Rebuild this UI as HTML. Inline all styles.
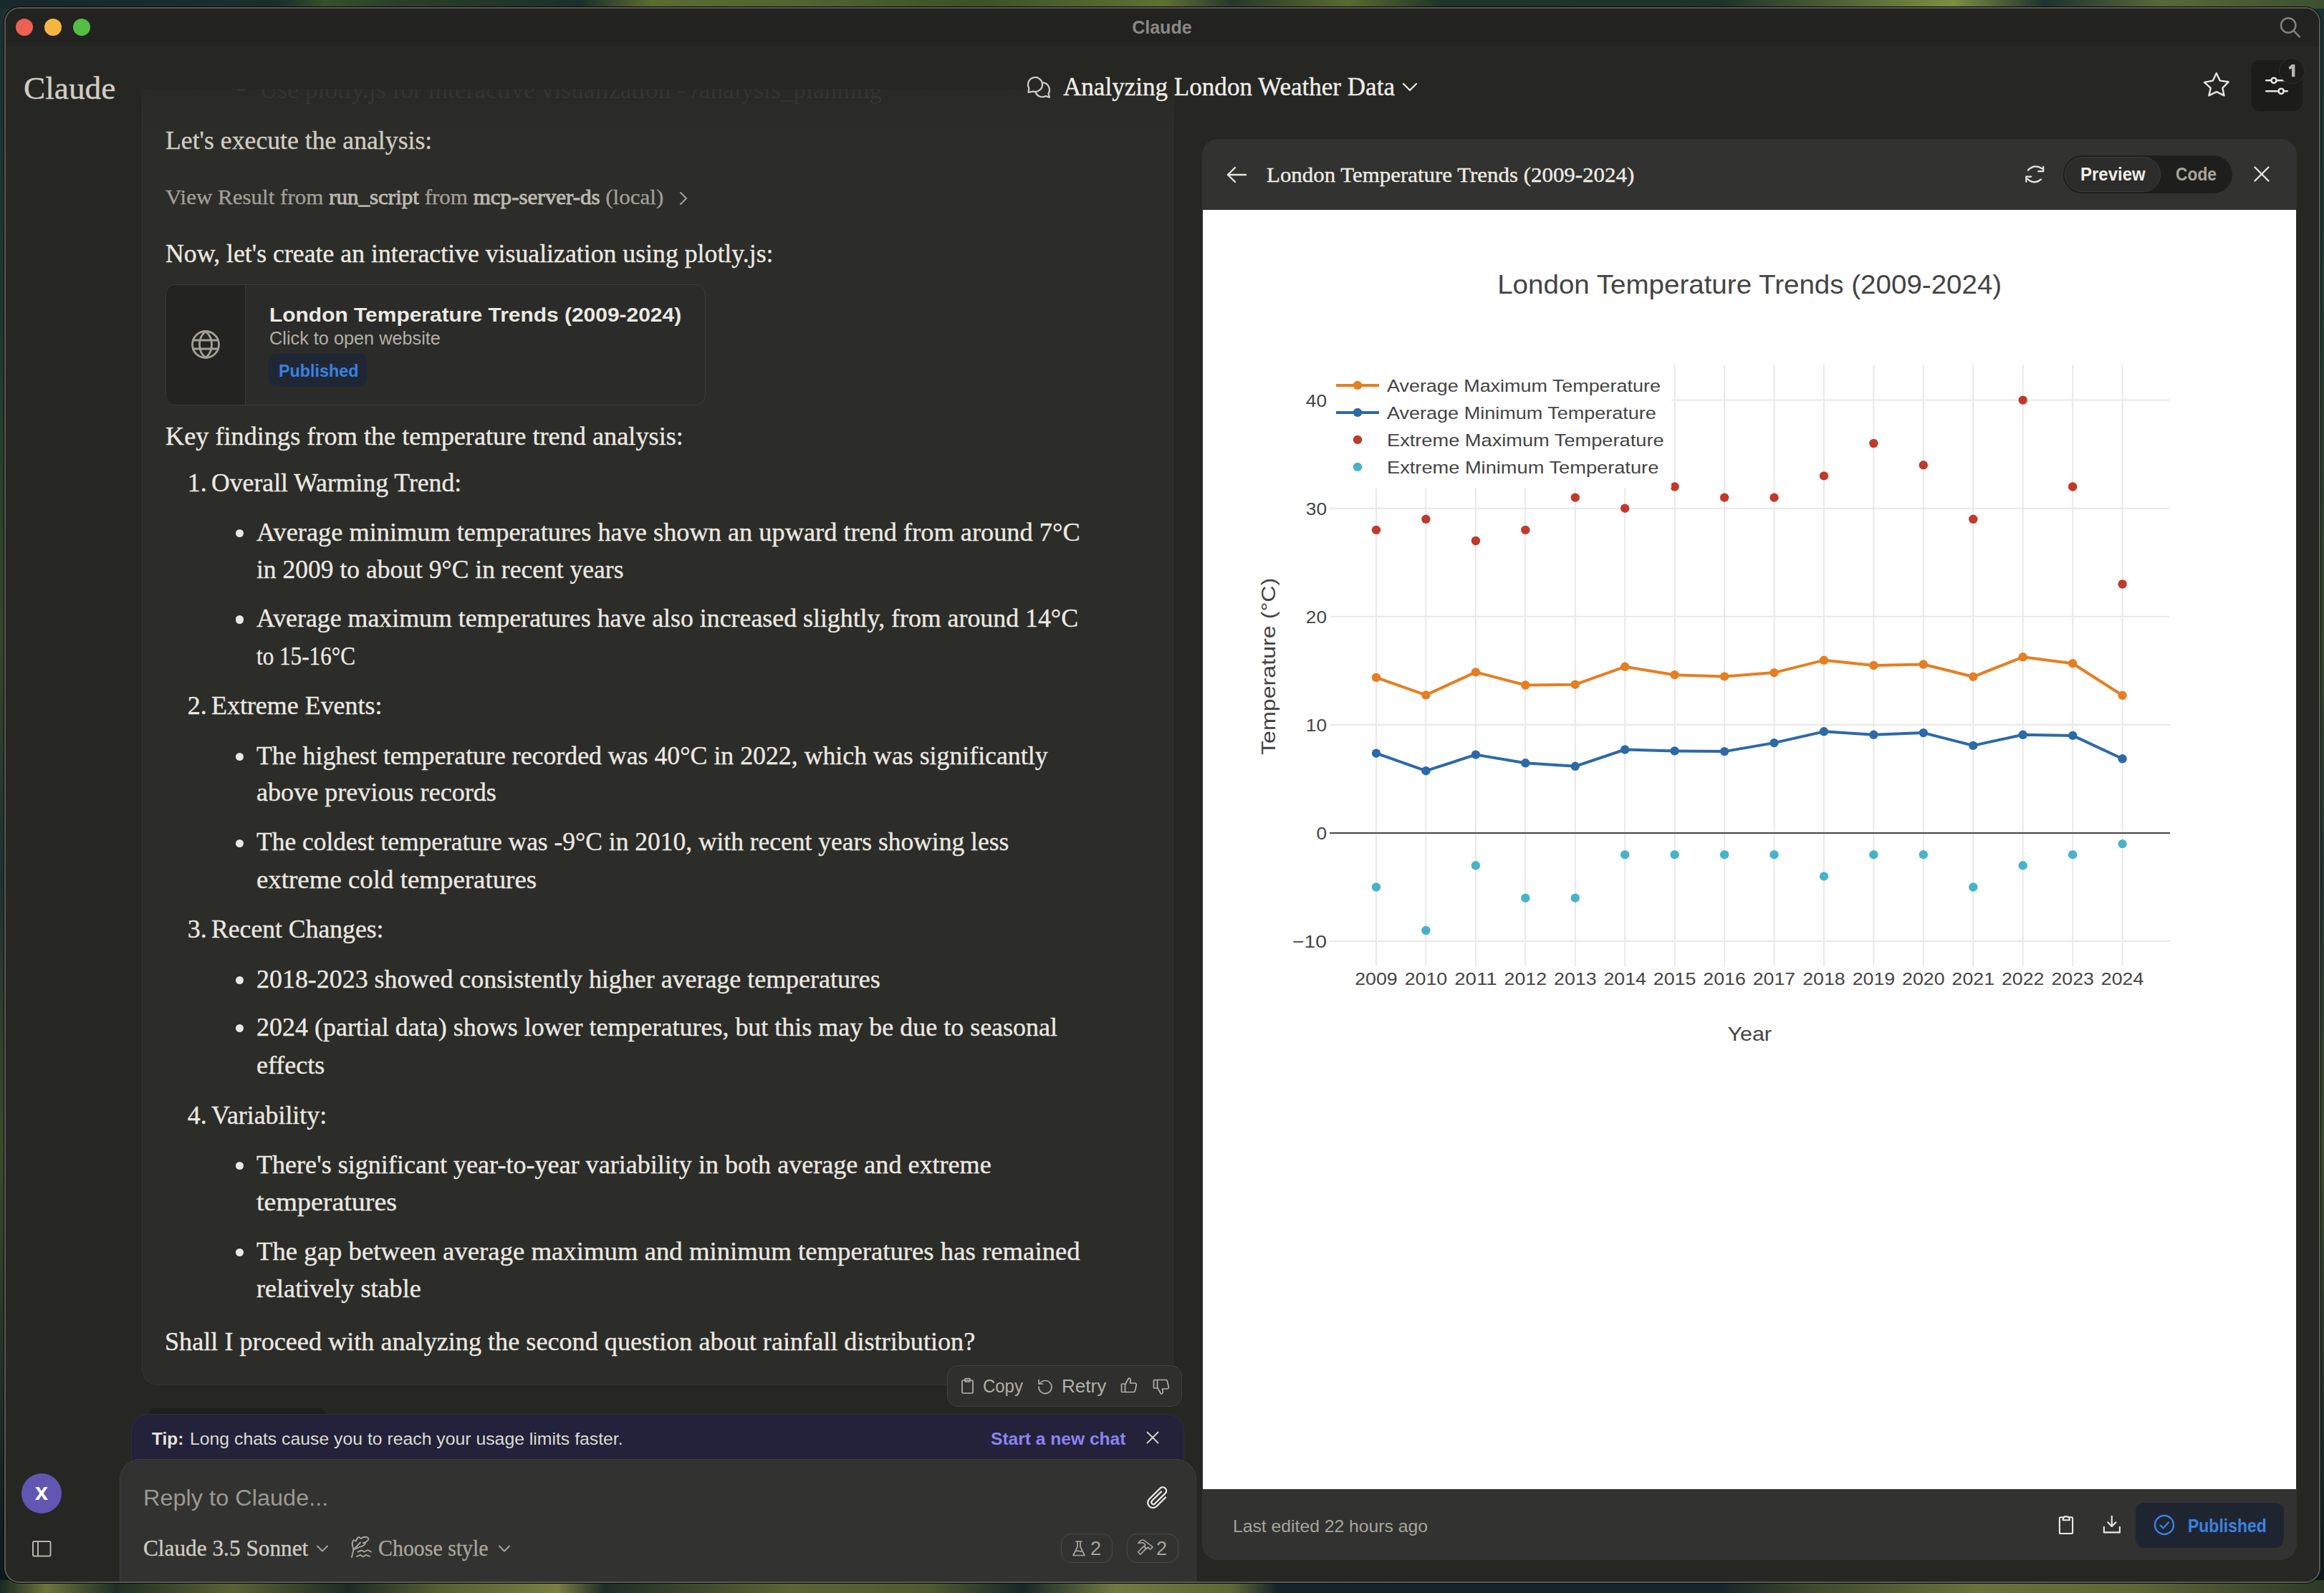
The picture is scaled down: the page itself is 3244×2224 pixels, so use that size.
<!DOCTYPE html>
<html><head><meta charset="utf-8"><title>Claude</title>
<style>
html,body{margin:0;padding:0}
body{width:3244px;height:2224px;position:relative;overflow:hidden;
background:linear-gradient(180deg,#1b3030 0%,#1f372e 20%,#34462b 40%,#1f3030 55%,#3a4a2c 72%,#1c2a26 90%,#0c1618 100%);}
.bgt{position:absolute;left:0;top:0;width:3244px;height:12px;background:linear-gradient(90deg,#17292b 0%,#1a2e2c 12%,#35502a 14%,#2a4028 17%,#1b2f2c 25%,#5c6b32 28%,#4f6230 35%,#3a5228 42%,#607034 50%,#26392a 53%,#5a6a30 58%,#1f3529 62%,#1d3329 74%,#7f8d42 84%,#1e3230 88%,#59683a 93%,#3c5030 100%)}
.bgb{position:absolute;left:0;top:2206px;width:3244px;height:18px;background:linear-gradient(90deg,#1a2a22 0%,#6d7538 2%,#1f3026 5%,#5a6230 10%,#1c2c24 15%,#566030 19%,#7a7e40 24%,#1e2e26 26%,#5c6432 34%,#4e5a2e 40%,#172829 44%,#727a3e 48%,#5e6834 53%,#14232a 55%,#16252a 74%,#3e4a2c 78%,#6a7238 85%,#5e6634 92%,#2c3a28 100%)}
.t{position:absolute;white-space:pre;}
.t.sf{-webkit-text-stroke:0.35px currentColor;}
.a{position:absolute;box-sizing:border-box;}
svg{position:absolute;overflow:visible}
</style></head><body>
<div class='bgt'></div><div class='bgb'></div>
<div class='a' style='left:5.5px;top:10px;width:3233px;height:2199.5px;border-radius:21px;background:#262623;border:2px solid #595956;box-shadow:0 0 0 1px #0a0a0a;overflow:hidden'><div class='a' style='left:0;top:0;width:100%;height:54px;background:#222220'></div></div>
<div class='a' style='left:198px;top:100px;width:1440px;height:1834px;background:#2c2c29;border:1.5px solid #353532;border-top:none;border-radius:0 0 22px 22px'></div>
<div class='t sf' style="left:362.4px;top:107.2px;font-family:'Liberation Serif',serif;font-size:36px;line-height:36px;font-weight:400;color:#41413d;transform:scaleX(0.9827);transform-origin:left center;-webkit-text-stroke:0">Use plotly.js for interactive visualization - /analysis_planning</div>
<div class='a' style='left:332px;top:124px;width:10px;height:3px;background:#474743'></div>
<div class='a' style='left:7.5px;top:65px;width:3229px;height:59px;background:#262623'></div>
<div class='a' style='left:198px;top:124px;width:1440px;height:60px;background:linear-gradient(rgba(38,38,36,0.55) 0%,rgba(43,43,41,0) 100%)'></div>
<div class='a' style='left:1678px;top:194px;width:1528px;height:1984px;background:#323230;border-radius:22px'></div>
<div class='a' style='left:1679px;top:293px;width:1526px;height:1786px;background:#ffffff'></div>
<div class='a' style='left:22px;top:26px;width:24px;height:24px;border-radius:50%;background:#ee5f55'></div>
<div class='a' style='left:62px;top:26px;width:24px;height:24px;border-radius:50%;background:#f5b63f'></div>
<div class='a' style='left:102px;top:26px;width:24px;height:24px;border-radius:50%;background:#55bd46'></div>
<div class='t' style="left:-378.1px;width:4000px;text-align:center;top:26.1px;font-family:'Liberation Sans',sans-serif;font-size:25px;line-height:25px;font-weight:700;color:#8a8985;">Claude</div>
<svg style='left:3174px;top:15px' width='44' height='44' viewBox='0 0 44 44'><circle cx='20.2' cy='20.4' r='10.2' fill='none' stroke='#858580' stroke-width='2.4'/><line x1='27.6' y1='27.8' x2='36' y2='36.5' stroke='#858580' stroke-width='2.4' stroke-linecap='round'/></svg>
<div class='t sf' style="left:32.6px;top:101.3px;font-family:'Liberation Serif',serif;font-size:45px;line-height:45px;font-weight:400;color:#d2cec4;transform:scaleX(1.0073);transform-origin:left center;">Claude</div>
<svg style='left:1425px;top:95px' width='60' height='50' viewBox='0 0 60 50'><g fill='none' stroke='#cfcbc1' stroke-width='2.3' stroke-linejoin='round' stroke-linecap='round'><path d='M11.34 28 A10 10 0 1 1 17.4 32.66 L10.5 33.8 Z'/><path d='M31 20.4 A10 10 0 0 1 38.5 35.5 L39.8 40.8 L34.5 39.2 A10 10 0 0 1 20.7 34.2'/></g></svg>
<div class='t sf' style="left:1484.3px;top:104.4px;font-family:'Liberation Serif',serif;font-size:35px;line-height:35px;font-weight:400;color:#f0eee8;transform:scaleX(1.0020);transform-origin:left center;">Analyzing London Weather Data</div>
<svg style='left:1956px;top:113px' width='24' height='16' viewBox='0 0 24 16'><path d='M3 4l9 9 9-9' fill='none' stroke='#e8e6df' stroke-width='2.4' stroke-linecap='round' stroke-linejoin='round'/></svg>
<svg style='left:3072px;top:98px' width='44' height='42' viewBox='0 0 44 42'><path d='M21.8 4.2L26.8 14.6L38.6 16.3L30.4 24.9L32.5 35.4L22 30.2L11.4 35.4L13.8 24.9L5 16.9L16.9 14.6Z' fill='none' stroke='#e8e6df' stroke-width='2.4' stroke-linejoin='round'/></svg>
<div class='a' style='left:3142px;top:84px;width:72px;height:71px;border-radius:13px;background:#1c1c1a'></div>
<svg style='left:3150px;top:95px' width='50' height='45' viewBox='0 0 50 45'><g fill='none' stroke='#e8e6df' stroke-width='2.5' stroke-linecap='round'><line x1='13.3' y1='17.3' x2='20.4' y2='17.3'/><line x1='27.6' y1='17.3' x2='42.7' y2='17.3'/><circle cx='24' cy='17.3' r='3.6'/><line x1='13.3' y1='32.3' x2='30.6' y2='32.3'/><line x1='37.8' y1='32.3' x2='42.7' y2='32.3'/><circle cx='34.2' cy='32.3' r='3.6'/></g></svg>
<div class='a' style='left:3181px;top:81px;width:36px;height:36px;border-radius:50%;background:#1c1c1a;border:1.5px solid #2e2e2c'></div>
<svg style='left:3190px;top:86px' width='20' height='26' viewBox='0 0 20 26'><path d='M9 4L13.4 4L13.4 21.2L9 21.2L9 9.4L6.1 11.3L4.5 7.9Z' fill='#b8b5ad'/></svg>
<div class='t sf' style="left:230.5px;top:178.0px;font-family:'Liberation Serif',serif;font-size:36px;line-height:36px;font-weight:400;color:#cfccc3;transform:scaleX(0.9918);transform-origin:left center;">Let's execute the analysis:</div>
<div class='t sf' style="left:230.5px;top:260.0px;font-family:'Liberation Serif',serif;font-size:30px;line-height:30px;font-weight:400;color:#a29f96;transform:scaleX(1.0339);transform-origin:left center;">View Result from <b style='color:#bdb9b0;font-weight:400;-webkit-text-stroke:0.9px #bdb9b0'>run_script</b> from <b style='color:#bdb9b0;font-weight:400;-webkit-text-stroke:0.9px #bdb9b0'>mcp-server-ds</b> (local)</div>
<svg style='left:944px;top:266px' width='20' height='22' viewBox='0 0 20 22'><path d='M6 3l8 8-8 8' fill='none' stroke='#a29f96' stroke-width='2.2' stroke-linecap='round' stroke-linejoin='round'/></svg>
<div class='t sf' style="left:230.5px;top:336.2px;font-family:'Liberation Serif',serif;font-size:36px;line-height:36px;font-weight:400;color:#ebe9e2;transform:scaleX(0.9929);transform-origin:left center;">Now, let's create an interactive visualization using plotly.js:</div>
<div class='a' style='left:230.5px;top:396.6px;width:754px;height:169px;border-radius:14px;background:#2b2b29;border:1.5px solid #3c3c39;overflow:hidden'><div class='a' style='left:0;top:0;width:111px;height:100%;background:#232321;border-right:1.5px solid #3c3c39'></div></div>
<svg style='left:264px;top:458px' width='46' height='46' viewBox='0 0 46 46'><g fill='none' stroke='#a3a097' stroke-width='2.8'><circle cx='23' cy='23' r='18.5'/><path d='M23 4.8A17 21 0 0 0 23 41.2A17 21 0 0 0 23 4.8Z'/><line x1='4.5' y1='17' x2='41.5' y2='17'/><line x1='4.5' y1='29' x2='41.5' y2='29'/></g></svg>
<div class='t' style="left:376.1px;top:426.0px;font-family:'Liberation Sans',sans-serif;font-size:27.5px;line-height:27.5px;font-weight:700;color:#eceae3;transform:scaleX(1.0887);transform-origin:left center;">London Temperature Trends (2009-2024)</div>
<div class='t' style="left:376.1px;top:460.4px;font-family:'Liberation Sans',sans-serif;font-size:25px;line-height:25px;font-weight:400;color:#b3b0a7;transform:scaleX(1.0113);transform-origin:left center;">Click to open website</div>
<div class='a' style='left:375.2px;top:493px;width:137px;height:47.4px;border-radius:12px;background:#1f2734'></div>
<div class='t' style="left:388.8px;top:505.5px;font-family:'Liberation Sans',sans-serif;font-size:24.5px;line-height:24.5px;font-weight:700;color:#3b82e0;transform:scaleX(0.9524);transform-origin:left center;">Published</div>
<div class='t sf' style="left:230.5px;top:591.0px;font-family:'Liberation Serif',serif;font-size:36px;line-height:36px;font-weight:400;color:#ebe9e2;transform:scaleX(1.0071);transform-origin:left center;">Key findings from the temperature trend analysis:</div>
<div class='t sf' style="left:261.8px;top:656.1px;font-family:'Liberation Serif',serif;font-size:36px;line-height:36px;font-weight:400;color:#ebe9e2;">1.</div>
<div class='t sf' style="left:294.6px;top:656.1px;font-family:'Liberation Serif',serif;font-size:36px;line-height:36px;font-weight:400;color:#ebe9e2;transform:scaleX(0.9909);transform-origin:left center;">Overall Warming Trend:</div>
<div class='a' style='left:328.9px;top:738.7px;width:11.4px;height:11.4px;border-radius:50%;background:#ebe9e2'></div>
<div class='t sf' style="left:358.3px;top:724.6px;font-family:'Liberation Serif',serif;font-size:36px;line-height:36px;font-weight:400;color:#ebe9e2;transform:scaleX(1.0090);transform-origin:left center;">Average minimum temperatures have shown an upward trend from around 7°C</div>
<div class='t sf' style="left:358.3px;top:777.1px;font-family:'Liberation Serif',serif;font-size:36px;line-height:36px;font-weight:400;color:#ebe9e2;transform:scaleX(0.9869);transform-origin:left center;">in 2009 to about 9°C in recent years</div>
<div class='a' style='left:328.9px;top:859.4px;width:11.4px;height:11.4px;border-radius:50%;background:#ebe9e2'></div>
<div class='t sf' style="left:358.3px;top:845.4px;font-family:'Liberation Serif',serif;font-size:36px;line-height:36px;font-weight:400;color:#ebe9e2;transform:scaleX(0.9948);transform-origin:left center;">Average maximum temperatures have also increased slightly, from around 14°C</div>
<div class='t sf' style="left:358.3px;top:898.1px;font-family:'Liberation Serif',serif;font-size:36px;line-height:36px;font-weight:400;color:#ebe9e2;transform:scaleX(0.8657);transform-origin:left center;">to 15-16°C</div>
<div class='t sf' style="left:261.8px;top:966.6px;font-family:'Liberation Serif',serif;font-size:36px;line-height:36px;font-weight:400;color:#ebe9e2;">2.</div>
<div class='t sf' style="left:294.6px;top:966.6px;font-family:'Liberation Serif',serif;font-size:36px;line-height:36px;font-weight:400;color:#ebe9e2;transform:scaleX(0.9982);transform-origin:left center;">Extreme Events:</div>
<div class='a' style='left:328.9px;top:1050.6px;width:11.4px;height:11.4px;border-radius:50%;background:#ebe9e2'></div>
<div class='t sf' style="left:358.3px;top:1036.5px;font-family:'Liberation Serif',serif;font-size:36px;line-height:36px;font-weight:400;color:#ebe9e2;transform:scaleX(0.9941);transform-origin:left center;">The highest temperature recorded was 40°C in 2022, which was significantly</div>
<div class='t sf' style="left:358.3px;top:1087.8px;font-family:'Liberation Serif',serif;font-size:36px;line-height:36px;font-weight:400;color:#ebe9e2;transform:scaleX(1.0030);transform-origin:left center;">above previous records</div>
<div class='a' style='left:328.9px;top:1171.5px;width:11.4px;height:11.4px;border-radius:50%;background:#ebe9e2'></div>
<div class='t sf' style="left:358.3px;top:1157.4px;font-family:'Liberation Serif',serif;font-size:36px;line-height:36px;font-weight:400;color:#ebe9e2;transform:scaleX(0.9851);transform-origin:left center;">The coldest temperature was -9°C in 2010, with recent years showing less</div>
<div class='t sf' style="left:358.3px;top:1210.1px;font-family:'Liberation Serif',serif;font-size:36px;line-height:36px;font-weight:400;color:#ebe9e2;transform:scaleX(1.0243);transform-origin:left center;">extreme cold temperatures</div>
<div class='t sf' style="left:261.8px;top:1278.8px;font-family:'Liberation Serif',serif;font-size:36px;line-height:36px;font-weight:400;color:#ebe9e2;">3.</div>
<div class='t sf' style="left:294.6px;top:1278.8px;font-family:'Liberation Serif',serif;font-size:36px;line-height:36px;font-weight:400;color:#ebe9e2;transform:scaleX(0.9900);transform-origin:left center;">Recent Changes:</div>
<div class='a' style='left:328.9px;top:1362.8px;width:11.4px;height:11.4px;border-radius:50%;background:#ebe9e2'></div>
<div class='t sf' style="left:358.3px;top:1348.8px;font-family:'Liberation Serif',serif;font-size:36px;line-height:36px;font-weight:400;color:#ebe9e2;transform:scaleX(0.9977);transform-origin:left center;">2018-2023 showed consistently higher average temperatures</div>
<div class='a' style='left:328.9px;top:1430.1px;width:11.4px;height:11.4px;border-radius:50%;background:#ebe9e2'></div>
<div class='t sf' style="left:358.3px;top:1416.0px;font-family:'Liberation Serif',serif;font-size:36px;line-height:36px;font-weight:400;color:#ebe9e2;transform:scaleX(0.9994);transform-origin:left center;">2024 (partial data) shows lower temperatures, but this may be due to seasonal</div>
<div class='t sf' style="left:358.3px;top:1469.2px;font-family:'Liberation Serif',serif;font-size:36px;line-height:36px;font-weight:400;color:#ebe9e2;transform:scaleX(1.0012);transform-origin:left center;">effects</div>
<div class='t sf' style="left:261.8px;top:1538.6px;font-family:'Liberation Serif',serif;font-size:36px;line-height:36px;font-weight:400;color:#ebe9e2;">4.</div>
<div class='t sf' style="left:294.6px;top:1538.6px;font-family:'Liberation Serif',serif;font-size:36px;line-height:36px;font-weight:400;color:#ebe9e2;transform:scaleX(0.9946);transform-origin:left center;">Variability:</div>
<div class='a' style='left:328.9px;top:1621.7px;width:11.4px;height:11.4px;border-radius:50%;background:#ebe9e2'></div>
<div class='t sf' style="left:358.3px;top:1607.6px;font-family:'Liberation Serif',serif;font-size:36px;line-height:36px;font-weight:400;color:#ebe9e2;transform:scaleX(1.0023);transform-origin:left center;">There's significant year-to-year variability in both average and extreme</div>
<div class='t sf' style="left:358.3px;top:1660.2px;font-family:'Liberation Serif',serif;font-size:36px;line-height:36px;font-weight:400;color:#ebe9e2;transform:scaleX(1.0548);transform-origin:left center;">temperatures</div>
<div class='a' style='left:328.9px;top:1742.8px;width:11.4px;height:11.4px;border-radius:50%;background:#ebe9e2'></div>
<div class='t sf' style="left:358.3px;top:1728.8px;font-family:'Liberation Serif',serif;font-size:36px;line-height:36px;font-weight:400;color:#ebe9e2;transform:scaleX(1.0205);transform-origin:left center;">The gap between average maximum and minimum temperatures has remained</div>
<div class='t sf' style="left:358.3px;top:1781.1px;font-family:'Liberation Serif',serif;font-size:36px;line-height:36px;font-weight:400;color:#ebe9e2;transform:scaleX(1.0035);transform-origin:left center;">relatively stable</div>
<div class='t sf' style="left:230.2px;top:1855.1px;font-family:'Liberation Serif',serif;font-size:36px;line-height:36px;font-weight:400;color:#ebe9e2;transform:scaleX(1.0049);transform-origin:left center;">Shall I proceed with analyzing the second question about rainfall distribution?</div>
<div class='a' style='left:1322px;top:1906px;width:328px;height:58px;border-radius:15px;background:#2f2f2d;border:1.5px solid #43423e'></div>
<svg style='left:1338px;top:1922px' width='26' height='26' viewBox='0 0 26 26'><g fill='none' stroke='#b3b0a7' stroke-width='1.7' stroke-linejoin='round'><rect x='5' y='5' width='15' height='18' rx='1.5'/><rect x='9' y='2.5' width='7' height='4.5' rx='1'/></g></svg>
<div class='t' style="left:1372.2px;top:1923.4px;font-family:'Liberation Sans',sans-serif;font-size:25px;line-height:25px;font-weight:400;color:#b3b0a7;transform:scaleX(0.9576);transform-origin:left center;">Copy</div>
<svg style='left:1446px;top:1922px' width='26' height='26' viewBox='0 0 26 26'><g fill='none' stroke='#b3b0a7' stroke-width='1.7' stroke-linecap='round' stroke-linejoin='round'><path d='M5.5 9.5A9 9 0 1 1 4 14'/><path d='M4 4.5v5.5h5.5'/></g></svg>
<div class='t' style="left:1482.0px;top:1923.4px;font-family:'Liberation Sans',sans-serif;font-size:25px;line-height:25px;font-weight:400;color:#b3b0a7;transform:scaleX(1.0430);transform-origin:left center;">Retry</div>
<svg style='left:1563px;top:1921px' width='26' height='26' viewBox='0 0 26 26'><g fill='none' stroke='#b3b0a7' stroke-width='1.7' stroke-linejoin='round'><rect x='2.5' y='11' width='5' height='11.5' rx='1'/><path d='M7.5 12l5-9c2 0 3 1.5 2.6 3.5L14.5 10h6.5c1.5 0 2.5 1.3 2.2 2.8l-1.8 8c-.3 1-1.1 1.7-2.2 1.7H7.5'/></g></svg>
<svg style='left:1608px;top:1923px' width='26' height='26' viewBox='0 0 26 26'><g fill='none' stroke='#b3b0a7' stroke-width='1.7' stroke-linejoin='round' transform='translate(0,26) scale(1,-1)'><rect x='2.5' y='11' width='5' height='11.5' rx='1'/><path d='M7.5 12l5-9c2 0 3 1.5 2.6 3.5L14.5 10h6.5c1.5 0 2.5 1.3 2.2 2.8l-1.8 8c-.3 1-1.1 1.7-2.2 1.7H7.5'/></g></svg>
<div class='a' style='left:206px;top:1966px;width:250px;height:20px;border-radius:12px 12px 0 0;background:#1e1e1c'></div>
<div class='a' style='left:183px;top:1973.5px;width:1470px;height:100px;border-radius:24px 24px 0 0;background:#23223a;border:1.5px solid #2e2c4e'></div>
<div class='t' style="left:211.7px;top:1997.1px;font-family:'Liberation Sans',sans-serif;font-size:24.5px;line-height:24.5px;font-weight:700;color:#e6e4dd;transform:scaleX(0.9962);transform-origin:left center;">Tip:</div>
<div class='t' style="left:264.6px;top:1997.1px;font-family:'Liberation Sans',sans-serif;font-size:24.5px;line-height:24.5px;font-weight:400;color:#dddbd4;transform:scaleX(1.0113);transform-origin:left center;">Long chats cause you to reach your usage limits faster.</div>
<div class='t' style="left:1383.0px;top:1997.1px;font-family:'Liberation Sans',sans-serif;font-size:24.5px;line-height:24.5px;font-weight:700;color:#8e83f2;transform:scaleX(1.0027);transform-origin:left center;">Start a new chat</div>
<svg style='left:1598px;top:1996px' width='22' height='22' viewBox='0 0 22 22'><g stroke='#d8d6cf' stroke-width='1.8' stroke-linecap='round'><line x1='3.5' y1='3.5' x2='18.5' y2='18.5'/><line x1='18.5' y1='3.5' x2='3.5' y2='18.5'/></g></svg>
<div class='a' style='left:166.5px;top:2037px;width:1503px;height:171px;border-radius:28px 28px 0 0;background:#323230;border:1.5px solid #3d3d3a;border-bottom:none'></div>
<div class='t' style="left:200.0px;top:2075.5px;font-family:'Liberation Sans',sans-serif;font-size:31px;line-height:31px;font-weight:400;color:#9c9991;transform:scaleX(1.0482);transform-origin:left center;">Reply to Claude...</div>
<svg style='left:1590px;top:2065px' width='50' height='50' viewBox='0 0 50 50'><path d='M37 25.5L24.5 38A7.2 7.2 0 0 1 14.3 27.8L29.8 12.5A5 5 0 0 1 36.8 19.6L22 34.3A2.83 2.83 0 0 1 18 30.3L31 17.5' fill='none' stroke='#eceae3' stroke-width='2.3' stroke-linecap='round' stroke-linejoin='round'/></svg>
<div class='t sf' style="left:200.0px;top:2145.6px;font-family:'Liberation Serif',serif;font-size:31.5px;line-height:31.5px;font-weight:400;color:#cfccc3;transform:scaleX(0.9933);transform-origin:left center;">Claude 3.5 Sonnet</div>
<svg style='left:440px;top:2155px' width='20' height='14' viewBox='0 0 20 14'><path d='M3 3.5l7 7 7-7' fill='none' stroke='#a8a59c' stroke-width='2' stroke-linecap='round' stroke-linejoin='round'/></svg>
<svg style='left:480px;top:2135px' width='50' height='50' viewBox='0 0 50 50'><g fill='none' stroke='#a8a59c' stroke-width='1.9' stroke-linejoin='round' stroke-linecap='round'><path d='M13.5 28.5C12 24 10 18 14 15L17 16.5C18 13 20 11 21 11L24 13C26 11 29 10.5 32 11C34 12 35 13.5 34 15L30.5 18L27 19L30 20C29 21.5 28 22.5 27 23C23 24.5 19 25.5 13.5 28.5Z'/><path d='M11 39L13.5 28.5L23 18.5'/><path d='M19.5 31.5L25 29.5L28.5 31.5L33.3 29L38 31.5'/><path d='M18 38L23 35.8L26.7 38.5L31 35.8L36 37.8'/></g></svg>
<div class='t sf' style="left:528.4px;top:2145.6px;font-family:'Liberation Serif',serif;font-size:31.5px;line-height:31.5px;font-weight:400;color:#a8a59c;transform:scaleX(0.9489);transform-origin:left center;">Choose style</div>
<svg style='left:694px;top:2155px' width='20' height='14' viewBox='0 0 20 14'><path d='M3 3.5l7 7 7-7' fill='none' stroke='#a8a59c' stroke-width='2' stroke-linecap='round' stroke-linejoin='round'/></svg>
<div class='a' style='left:1481px;top:2140.5px;width:72px;height:41.5px;border-radius:14px;border:1.5px solid #4a4944'></div>
<svg style='left:1494px;top:2149px' width='24' height='26' viewBox='0 0 24 26'><path d='M8 3h8M10 3v7.5L4 22.5h16L14 10.5V3' fill='none' stroke='#a8a59c' stroke-width='1.7' stroke-linejoin='round' stroke-linecap='round'/><path d='M7 16.5c3-1.5 6 1.5 10 0' fill='none' stroke='#a8a59c' stroke-width='1.8'/></svg>
<div class='t' style="left:1522.0px;top:2149.1px;font-family:'Liberation Sans',sans-serif;font-size:27px;line-height:27px;font-weight:400;color:#a8a59c;">2</div>
<div class='a' style='left:1573.4px;top:2140.5px;width:72px;height:41.5px;border-radius:14px;border:1.5px solid #4a4944'></div>
<svg style='left:1586px;top:2147px' width='26' height='26' viewBox='0 0 26 26'><g fill='none' stroke='#a8a59c' stroke-width='1.6' stroke-linejoin='round'><path d='M2.5 19.8l8.2-8.2 3.3 3.3-8.2 8.2z'/><path d='M2.8 7.5C5 4 8 2.5 10.5 3.2L23 12.6l-3.3 3.6-3.5-3-2.2 2.3-3.3-3.3 2.2-2.3-2.8-2.8C8 6.5 5 6.5 2.8 7.5z'/></g></svg>
<div class='t' style="left:1614.0px;top:2149.1px;font-family:'Liberation Sans',sans-serif;font-size:27px;line-height:27px;font-weight:400;color:#a8a59c;">2</div>
<div class='a' style='left:30px;top:2057px;width:56px;height:56px;border-radius:50%;background:#6156b2'></div>
<div class='t' style="left:-1942.0px;width:4000px;text-align:center;top:2066.2px;font-family:'Liberation Sans',sans-serif;font-size:33px;line-height:33px;font-weight:700;color:#ffffff;">x</div>
<svg style='left:40px;top:2146px' width='36' height='32' viewBox='0 0 36 32'><g fill='none' stroke='#b8b4aa' stroke-width='2'><rect x='6' y='6' width='24.5' height='20.5' rx='2'/><line x1='13' y1='6' x2='13' y2='26.5'/></g></svg>
<svg style='left:1710px;top:230px' width='34' height='28' viewBox='0 0 34 28'><g fill='none' stroke='#e8e6df' stroke-width='2.4' stroke-linecap='round' stroke-linejoin='round'><line x1='4' y1='14' x2='29' y2='14'/><path d='M14 4L4 14l10 10'/></g></svg>
<div class='t sf' style="left:1767.8px;top:228.7px;font-family:'Liberation Serif',serif;font-size:30px;line-height:30px;font-weight:400;color:#eeece5;transform:scaleX(1.0303);transform-origin:left center;">London Temperature Trends (2009-2024)</div>
<svg style='left:2824px;top:228px' width='32' height='32' viewBox='0 0 32 32'><g fill='none' stroke='#e8e6df' stroke-width='2.2' stroke-linecap='round' stroke-linejoin='round'><path d='M6.7 9.6Q16.3 0.5 26.6 7.5'/><path d='M28.2 4.9V11.2H21.2'/><path d='M25 22.4Q15.5 30.5 5.9 21.6'/><path d='M4.3 25.8V18.6H11.3'/></g></svg>
<div class='a' style='left:2880.3px;top:216.5px;width:236.2px;height:53.6px;border-radius:27px;background:#1e1e1c'></div>
<div class='a' style='left:2882.3px;top:218.5px;width:133.5px;height:49.6px;border-radius:25px;background:#2c2c2a;border:1.5px solid #3e3e3b'></div>
<div class='t' style="left:2904.0px;top:231.4px;font-family:'Liberation Sans',sans-serif;font-size:25px;line-height:25px;font-weight:700;color:#f0eee8;transform:scaleX(0.9586);transform-origin:left center;">Preview</div>
<div class='t' style="left:3037.0px;top:231.4px;font-family:'Liberation Sans',sans-serif;font-size:25px;line-height:25px;font-weight:700;color:#a8a59c;transform:scaleX(0.9120);transform-origin:left center;">Code</div>
<svg style='left:3144px;top:230px' width='26' height='26' viewBox='0 0 26 26'><g stroke='#e8e6df' stroke-width='2.4' stroke-linecap='round'><line x1='3.5' y1='3.5' x2='22.5' y2='22.5'/><line x1='22.5' y1='3.5' x2='3.5' y2='22.5'/></g></svg>
<div class='t' style="left:1720.7px;top:2118.7px;font-family:'Liberation Sans',sans-serif;font-size:24px;line-height:24px;font-weight:400;color:#a8a59c;transform:scaleX(1.0295);transform-origin:left center;">Last edited 22 hours ago</div>
<svg style='left:2870px;top:2113px' width='30' height='32' viewBox='0 0 30 32'><g fill='none' stroke='#eceae3' stroke-width='2.1' stroke-linejoin='round'><rect x='4.9' y='5.2' width='18.2' height='22.8' rx='1.5'/><path d='M9.5 9.3L10 6.5A4.6 4 0 0 1 18.4 6.5L18.9 9.3Z' fill='#323230'/></g></svg>
<svg style='left:2932px;top:2112px' width='32' height='32' viewBox='0 0 32 32'><g fill='none' stroke='#eceae3' stroke-width='2.1' stroke-linecap='round' stroke-linejoin='round'><line x1='15.8' y1='4.8' x2='15.8' y2='19'/><path d='M10.3 13.3L15.8 19L21.4 13.3'/><path d='M4.9 19V27.4H26.9V19' stroke-linecap='butt' stroke-linejoin='miter'/></g></svg>
<div class='a' style='left:2980.7px;top:2098px;width:207.7px;height:62.5px;border-radius:12px;background:#1f2530'></div>
<svg style='left:3003px;top:2111px' width='36' height='36' viewBox='0 0 36 36'><g fill='none' stroke='#3b82e0' stroke-width='2.4' stroke-linecap='round' stroke-linejoin='round'><circle cx='18' cy='18' r='13'/><path d='M12.5 18.5l4 4 7.5-8'/></g></svg>
<div class='t' style="left:3053.5px;top:2117.0px;font-family:'Liberation Sans',sans-serif;font-size:26px;line-height:26px;font-weight:700;color:#3b82e0;transform:scaleX(0.8837);transform-origin:left center;">Published</div>
<svg style='left:0;top:0' width='3244' height='2224' viewBox='0 0 3244 2224'><g font-family='Liberation Sans, sans-serif' fill='#444444'><line x1='1856' x2='3029' y1='558.6' y2='558.6' stroke='#e8e8e8' stroke-width='2'/><line x1='1856' x2='3029' y1='709.7' y2='709.7' stroke='#e8e8e8' stroke-width='2'/><line x1='1856' x2='3029' y1='860.8' y2='860.8' stroke='#e8e8e8' stroke-width='2'/><line x1='1856' x2='3029' y1='1011.9' y2='1011.9' stroke='#e8e8e8' stroke-width='2'/><line x1='1856' x2='3029' y1='1314.1' y2='1314.1' stroke='#e8e8e8' stroke-width='2'/><line x1='1921.0' x2='1921.0' y1='509' y2='1349' stroke='#e8e8e8' stroke-width='2'/><line x1='1990.4' x2='1990.4' y1='509' y2='1349' stroke='#e8e8e8' stroke-width='2'/><line x1='2059.9' x2='2059.9' y1='509' y2='1349' stroke='#e8e8e8' stroke-width='2'/><line x1='2129.3' x2='2129.3' y1='509' y2='1349' stroke='#e8e8e8' stroke-width='2'/><line x1='2198.8' x2='2198.8' y1='509' y2='1349' stroke='#e8e8e8' stroke-width='2'/><line x1='2268.2' x2='2268.2' y1='509' y2='1349' stroke='#e8e8e8' stroke-width='2'/><line x1='2337.6' x2='2337.6' y1='509' y2='1349' stroke='#e8e8e8' stroke-width='2'/><line x1='2407.1' x2='2407.1' y1='509' y2='1349' stroke='#e8e8e8' stroke-width='2'/><line x1='2476.5' x2='2476.5' y1='509' y2='1349' stroke='#e8e8e8' stroke-width='2'/><line x1='2546.0' x2='2546.0' y1='509' y2='1349' stroke='#e8e8e8' stroke-width='2'/><line x1='2615.4' x2='2615.4' y1='509' y2='1349' stroke='#e8e8e8' stroke-width='2'/><line x1='2684.8' x2='2684.8' y1='509' y2='1349' stroke='#e8e8e8' stroke-width='2'/><line x1='2754.3' x2='2754.3' y1='509' y2='1349' stroke='#e8e8e8' stroke-width='2'/><line x1='2823.7' x2='2823.7' y1='509' y2='1349' stroke='#e8e8e8' stroke-width='2'/><line x1='2893.2' x2='2893.2' y1='509' y2='1349' stroke='#e8e8e8' stroke-width='2'/><line x1='2962.6' x2='2962.6' y1='509' y2='1349' stroke='#e8e8e8' stroke-width='2'/><line x1='1856' x2='3029' y1='1163.0' y2='1163.0' stroke='#444' stroke-width='2'/><polyline points='1921.0,945.9 1990.4,970.4 2059.9,938.4 2129.3,956.5 2198.8,955.7 2268.2,930.8 2337.6,942.2 2407.1,944.4 2476.5,939.1 2546.0,921.8 2615.4,929.0 2684.8,927.5 2754.3,944.8 2823.7,917.3 2893.2,926.3 2962.6,970.8' fill='none' stroke='#e67e22' stroke-width='4' stroke-linejoin='round'/><circle cx='1921.0' cy='945.9' r='6.2' fill='#e67e22'/><circle cx='1990.4' cy='970.4' r='6.2' fill='#e67e22'/><circle cx='2059.9' cy='938.4' r='6.2' fill='#e67e22'/><circle cx='2129.3' cy='956.5' r='6.2' fill='#e67e22'/><circle cx='2198.8' cy='955.7' r='6.2' fill='#e67e22'/><circle cx='2268.2' cy='930.8' r='6.2' fill='#e67e22'/><circle cx='2337.6' cy='942.2' r='6.2' fill='#e67e22'/><circle cx='2407.1' cy='944.4' r='6.2' fill='#e67e22'/><circle cx='2476.5' cy='939.1' r='6.2' fill='#e67e22'/><circle cx='2546.0' cy='921.8' r='6.2' fill='#e67e22'/><circle cx='2615.4' cy='929.0' r='6.2' fill='#e67e22'/><circle cx='2684.8' cy='927.5' r='6.2' fill='#e67e22'/><circle cx='2754.3' cy='944.8' r='6.2' fill='#e67e22'/><circle cx='2823.7' cy='917.3' r='6.2' fill='#e67e22'/><circle cx='2893.2' cy='926.3' r='6.2' fill='#e67e22'/><circle cx='2962.6' cy='970.8' r='6.2' fill='#e67e22'/><polyline points='1921.0,1051.7 1990.4,1076.2 2059.9,1053.6 2129.3,1065.3 2198.8,1069.8 2268.2,1046.5 2337.6,1048.4 2407.1,1049.1 2476.5,1037.1 2546.0,1021.3 2615.4,1025.8 2684.8,1023.1 2754.3,1040.9 2823.7,1025.8 2893.2,1026.9 2962.6,1059.3' fill='none' stroke='#2c69a8' stroke-width='4' stroke-linejoin='round'/><circle cx='1921.0' cy='1051.7' r='6.2' fill='#2c69a8'/><circle cx='1990.4' cy='1076.2' r='6.2' fill='#2c69a8'/><circle cx='2059.9' cy='1053.6' r='6.2' fill='#2c69a8'/><circle cx='2129.3' cy='1065.3' r='6.2' fill='#2c69a8'/><circle cx='2198.8' cy='1069.8' r='6.2' fill='#2c69a8'/><circle cx='2268.2' cy='1046.5' r='6.2' fill='#2c69a8'/><circle cx='2337.6' cy='1048.4' r='6.2' fill='#2c69a8'/><circle cx='2407.1' cy='1049.1' r='6.2' fill='#2c69a8'/><circle cx='2476.5' cy='1037.1' r='6.2' fill='#2c69a8'/><circle cx='2546.0' cy='1021.3' r='6.2' fill='#2c69a8'/><circle cx='2615.4' cy='1025.8' r='6.2' fill='#2c69a8'/><circle cx='2684.8' cy='1023.1' r='6.2' fill='#2c69a8'/><circle cx='2754.3' cy='1040.9' r='6.2' fill='#2c69a8'/><circle cx='2823.7' cy='1025.8' r='6.2' fill='#2c69a8'/><circle cx='2893.2' cy='1026.9' r='6.2' fill='#2c69a8'/><circle cx='2962.6' cy='1059.3' r='6.2' fill='#2c69a8'/><circle cx='1921.0' cy='739.9' r='6.2' fill='#c0392b'/><circle cx='1990.4' cy='724.8' r='6.2' fill='#c0392b'/><circle cx='2059.9' cy='755.0' r='6.2' fill='#c0392b'/><circle cx='2129.3' cy='739.9' r='6.2' fill='#c0392b'/><circle cx='2198.8' cy='694.6' r='6.2' fill='#c0392b'/><circle cx='2268.2' cy='709.7' r='6.2' fill='#c0392b'/><circle cx='2337.6' cy='679.5' r='6.2' fill='#c0392b'/><circle cx='2407.1' cy='694.6' r='6.2' fill='#c0392b'/><circle cx='2476.5' cy='694.6' r='6.2' fill='#c0392b'/><circle cx='2546.0' cy='664.4' r='6.2' fill='#c0392b'/><circle cx='2615.4' cy='619.0' r='6.2' fill='#c0392b'/><circle cx='2684.8' cy='649.3' r='6.2' fill='#c0392b'/><circle cx='2754.3' cy='724.8' r='6.2' fill='#c0392b'/><circle cx='2823.7' cy='558.6' r='6.2' fill='#c0392b'/><circle cx='2893.2' cy='679.5' r='6.2' fill='#c0392b'/><circle cx='2962.6' cy='815.5' r='6.2' fill='#c0392b'/><circle cx='1921.0' cy='1238.5' r='6.2' fill='#48b3c8'/><circle cx='1990.4' cy='1299.0' r='6.2' fill='#48b3c8'/><circle cx='2059.9' cy='1208.3' r='6.2' fill='#48b3c8'/><circle cx='2129.3' cy='1253.7' r='6.2' fill='#48b3c8'/><circle cx='2198.8' cy='1253.7' r='6.2' fill='#48b3c8'/><circle cx='2268.2' cy='1193.2' r='6.2' fill='#48b3c8'/><circle cx='2337.6' cy='1193.2' r='6.2' fill='#48b3c8'/><circle cx='2407.1' cy='1193.2' r='6.2' fill='#48b3c8'/><circle cx='2476.5' cy='1193.2' r='6.2' fill='#48b3c8'/><circle cx='2546.0' cy='1223.4' r='6.2' fill='#48b3c8'/><circle cx='2615.4' cy='1193.2' r='6.2' fill='#48b3c8'/><circle cx='2684.8' cy='1193.2' r='6.2' fill='#48b3c8'/><circle cx='2754.3' cy='1238.5' r='6.2' fill='#48b3c8'/><circle cx='2823.7' cy='1208.3' r='6.2' fill='#48b3c8'/><circle cx='2893.2' cy='1193.2' r='6.2' fill='#48b3c8'/><circle cx='2962.6' cy='1178.1' r='6.2' fill='#48b3c8'/><rect x='1850' y='505' width='483' height='176.5' fill='#ffffff'/><line x1='1865' x2='1925' y1='537.9' y2='537.9' stroke='#e67e22' stroke-width='4'/><circle cx='1895' cy='537.9' r='6.2' fill='#e67e22'/><text x='1936' y='546.9' font-size='24.5' textLength='381.9' lengthAdjust='spacingAndGlyphs'>Average Maximum Temperature</text><line x1='1865' x2='1925' y1='575.9' y2='575.9' stroke='#2c69a8' stroke-width='4'/><circle cx='1895' cy='575.9' r='6.2' fill='#2c69a8'/><text x='1936' y='584.9' font-size='24.5' textLength='375.9' lengthAdjust='spacingAndGlyphs'>Average Minimum Temperature</text><circle cx='1895' cy='613.9' r='6.2' fill='#c0392b'/><text x='1936' y='622.9' font-size='24.5' textLength='386.6' lengthAdjust='spacingAndGlyphs'>Extreme Maximum Temperature</text><circle cx='1895' cy='651.9' r='6.2' fill='#48b3c8'/><text x='1936' y='660.9' font-size='24.5' textLength='379.3' lengthAdjust='spacingAndGlyphs'>Extreme Minimum Temperature</text><text x='1852' y='567.5' font-size='24.5' text-anchor='end' textLength='29.2' lengthAdjust='spacingAndGlyphs'>40</text><text x='1852' y='718.6' font-size='24.5' text-anchor='end' textLength='29.2' lengthAdjust='spacingAndGlyphs'>30</text><text x='1852' y='869.7' font-size='24.5' text-anchor='end' textLength='29.2' lengthAdjust='spacingAndGlyphs'>20</text><text x='1852' y='1020.8' font-size='24.5' text-anchor='end' textLength='29.2' lengthAdjust='spacingAndGlyphs'>10</text><text x='1852' y='1171.9' font-size='24.5' text-anchor='end' textLength='14.6' lengthAdjust='spacingAndGlyphs'>0</text><text x='1852' y='1323.0' font-size='24.5' text-anchor='end' textLength='48' lengthAdjust='spacingAndGlyphs'>−10</text><text x='1921.0' y='1375.2' font-size='24.5' text-anchor='middle' textLength='59.5' lengthAdjust='spacingAndGlyphs'>2009</text><text x='1990.4' y='1375.2' font-size='24.5' text-anchor='middle' textLength='59.5' lengthAdjust='spacingAndGlyphs'>2010</text><text x='2059.9' y='1375.2' font-size='24.5' text-anchor='middle' textLength='59.5' lengthAdjust='spacingAndGlyphs'>2011</text><text x='2129.3' y='1375.2' font-size='24.5' text-anchor='middle' textLength='59.5' lengthAdjust='spacingAndGlyphs'>2012</text><text x='2198.8' y='1375.2' font-size='24.5' text-anchor='middle' textLength='59.5' lengthAdjust='spacingAndGlyphs'>2013</text><text x='2268.2' y='1375.2' font-size='24.5' text-anchor='middle' textLength='59.5' lengthAdjust='spacingAndGlyphs'>2014</text><text x='2337.6' y='1375.2' font-size='24.5' text-anchor='middle' textLength='59.5' lengthAdjust='spacingAndGlyphs'>2015</text><text x='2407.1' y='1375.2' font-size='24.5' text-anchor='middle' textLength='59.5' lengthAdjust='spacingAndGlyphs'>2016</text><text x='2476.5' y='1375.2' font-size='24.5' text-anchor='middle' textLength='59.5' lengthAdjust='spacingAndGlyphs'>2017</text><text x='2546.0' y='1375.2' font-size='24.5' text-anchor='middle' textLength='59.5' lengthAdjust='spacingAndGlyphs'>2018</text><text x='2615.4' y='1375.2' font-size='24.5' text-anchor='middle' textLength='59.5' lengthAdjust='spacingAndGlyphs'>2019</text><text x='2684.8' y='1375.2' font-size='24.5' text-anchor='middle' textLength='59.5' lengthAdjust='spacingAndGlyphs'>2020</text><text x='2754.3' y='1375.2' font-size='24.5' text-anchor='middle' textLength='59.5' lengthAdjust='spacingAndGlyphs'>2021</text><text x='2823.7' y='1375.2' font-size='24.5' text-anchor='middle' textLength='59.5' lengthAdjust='spacingAndGlyphs'>2022</text><text x='2893.2' y='1375.2' font-size='24.5' text-anchor='middle' textLength='59.5' lengthAdjust='spacingAndGlyphs'>2023</text><text x='2962.6' y='1375.2' font-size='24.5' text-anchor='middle' textLength='59.5' lengthAdjust='spacingAndGlyphs'>2024</text><text x='2442.2' y='409.7' font-size='36' text-anchor='middle' textLength='704' lengthAdjust='spacingAndGlyphs'>London Temperature Trends (2009-2024)</text><text x='2442.2' y='1453.1' font-size='28.5' text-anchor='middle' textLength='61.6' lengthAdjust='spacingAndGlyphs'>Year</text><text x='0' y='0' font-size='28.5' text-anchor='middle' textLength='247.3' lengthAdjust='spacingAndGlyphs' transform='translate(1779.6,930.4) rotate(-90)'>Temperature (°C)</text></g></svg>
</body></html>
